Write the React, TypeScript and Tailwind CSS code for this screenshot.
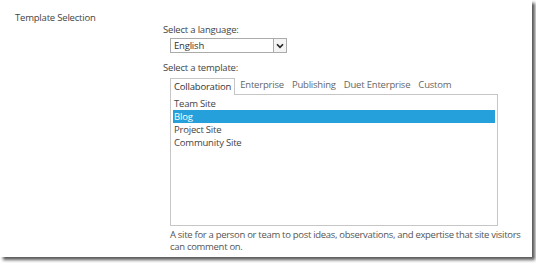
import { useState } from 'react';

const tabs = ['Collaboration', 'Enterprise', 'Publishing', 'Duet Enterprise', 'Custom'];
const templates = ['Team Site', 'Blog', 'Project Site', 'Community Site'];

// Template picker - SharePoint "new site" style
export default function App() {
  const [active] = useState(0);
  const [selected] = useState(1);

  return (
    <div className="w-[536px] h-[263px] bg-white overflow-hidden font-['Open_Sans',sans-serif] text-[9.5px] tracking-[-0.2px] text-[#444]">
      <div className="w-[532px] h-[257px] bg-white shadow-[3px_3px_3px_rgba(0,0,0,0.65)] flex">
        {/* Left label */}
        <div className="w-[163px] pl-[15px] pt-[10px] shrink-0 leading-[15px]">Template Selection</div>

        {/* Right side */}
        <div className="pt-[22px] flex flex-col">
          <div className="leading-[15px]">Select a language:</div>
          <div className="ml-[7px] mt-[1px] w-[117px] h-[15px] border border-[#ababab] flex items-center">
            <span className="flex-1 pl-[3px] leading-[13px] text-[#333]">English</span>
            <span className="w-[13px] h-[13px] border-l border-[#ababab] bg-[#f4f4f4] flex items-center justify-center">
              <svg width="8" height="6" viewBox="0 0 8 6">
                <path d="M1 1.2 L4 4.3 L7 1.2" fill="none" stroke="#222" strokeWidth="1.6" />
              </svg>
            </span>
          </div>

          <div className="mt-[7px] leading-[15px]">Select a template:</div>

          <div className="ml-[7px] mt-[2px] w-[328px] flex flex-col">
            {/* Tabs */}
            <div className="flex items-end h-[17px]">
              {tabs.map((t, i) => (
                <div
                  key={t}
                  className={
                    i === active
                      ? 'h-[17px] px-[3px] border border-b-0 border-[#c6c6c6] bg-white leading-[16px] text-[#333] relative top-[1px]'
                      : 'h-[17px] px-[3px] ml-[2px] leading-[16px] text-[#666]'
                  }
                >
                  {t}
                </div>
              ))}
            </div>

            {/* List */}
            <div className="h-[132px] border border-[#c6c6c6] pt-[2px] px-[2px]">
              {templates.map((t, i) => (
                <div
                  key={t}
                  className={
                    i === selected
                      ? 'h-[13px] leading-[13px] pl-[1px] bg-[#26a0da] text-white'
                      : 'h-[13px] leading-[13px] pl-[1px] text-[#444]'
                  }
                >
                  {t}
                </div>
              ))}
            </div>

            <div className="mt-[3px] leading-[12px] text-[#555] whitespace-nowrap tracking-[-0.3px]">
              A site for a person or team to post ideas, observations, and expertise that site visitors
              <br />
              can comment on.
            </div>
          </div>
        </div>
      </div>
    </div>
  );
}
